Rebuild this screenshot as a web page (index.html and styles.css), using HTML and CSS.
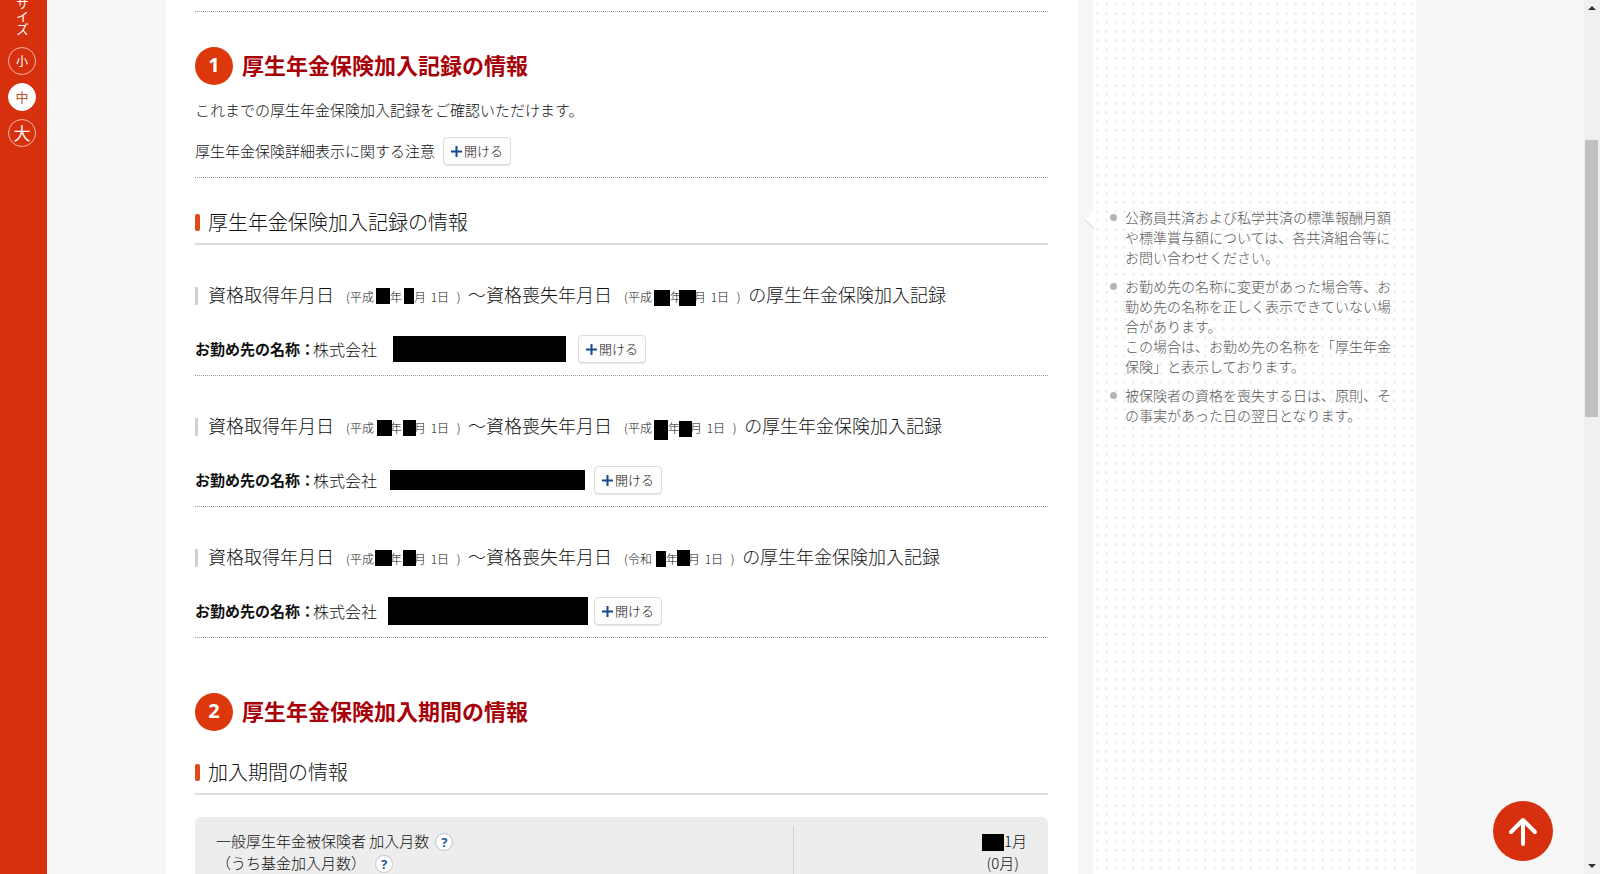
FILE: index.html
```html
<!DOCTYPE html>
<html lang="ja">
<head>
<meta charset="utf-8">
<title>厚生年金保険加入記録の情報</title>
<link rel="stylesheet" href="styles.css">
</head>
<body>
<nav class="sidebar" aria-label="文字サイズ">
  <span class="size-label">サイズ</span>
  <button class="size size-s" type="button">小</button>
  <button class="size size-m" type="button">中</button>
  <button class="size size-l" type="button">大</button>
</nav>
<div class="page">
  <main class="main">
    <div class="lead"></div>
    <section class="block">
      <h2 class="title"><span class="num">1</span>厚生年金保険加入記録の情報</h2>
      <p class="text">これまでの厚生年金保険加入記録をご確認いただけます。</p>
      <div class="notice">厚生年金保険詳細表示に関する注意
        <button class="open" type="button"><svg class="plus" viewBox="0 0 11 11"><path d="M5.5 0v11M0 5.5h11"/></svg>開ける</button>
      </div>
      <h3 class="subtitle">厚生年金保険加入記録の情報</h3>

      <article class="entry">
        <h4 class="period"><span>資格取得年月日</span><span class="date"><span class="open-paren">(</span>平成<span class="year"><i class="mask m14"></i></span>年<span class="month"><i class="mask m10"></i></span>月<span class="day">1</span>日<span class="close-paren">)</span></span><span>～資格喪失年月日</span><span class="date"><span class="open-paren">(</span>平成<span class="year wide"><i class="mask low m16"></i></span>年<span class="month"><i class="mask low over m17"></i></span>月<span class="day">1</span>日<span class="close-paren">)</span></span><span>の厚生年金保険加入記録</span></h4>
        <div class="employer"><b>お勤め先の名称：</b><span>株式会社</span><i class="name name-a"></i>
          <button class="open" type="button"><svg class="plus" viewBox="0 0 11 11"><path d="M5.5 0v11M0 5.5h11"/></svg>開ける</button>
        </div>
      </article>

      <article class="entry">
        <h4 class="period"><span>資格取得年月日</span><span class="date"><span class="open-paren">(</span>平成<span class="year"><i class="mask mid over m15"></i></span>年<span class="month"><i class="mask mid over m13"></i></span>月<span class="day">1</span>日<span class="close-paren">)</span></span><span>～資格喪失年月日</span><span class="date"><span class="open-paren">(</span>平成<span class="year"><i class="mask tall m14"></i></span>年<span class="month narrow"><i class="mask low over m13"></i></span>月<span class="day">1</span>日<span class="close-paren">)</span></span><span>の厚生年金保険加入記録</span></h4>
        <div class="employer"><b>お勤め先の名称：</b><span>株式会社</span><i class="name name-b"></i>
          <button class="open" type="button"><svg class="plus" viewBox="0 0 11 11"><path d="M5.5 0v11M0 5.5h11"/></svg>開ける</button>
        </div>
      </article>

      <article class="entry">
        <h4 class="period"><span>資格取得年月日</span><span class="date"><span class="open-paren">(</span>平成<span class="year"><i class="mask over m17"></i></span>年<span class="month"><i class="mask over m13"></i></span>月<span class="day">1</span>日<span class="close-paren">)</span></span><span>～資格喪失年月日</span><span class="date"><span class="open-paren">(</span>令和<span class="year narrow"><i class="mask mid m10"></i></span>年<span class="month narrow"><i class="mask over m13"></i></span>月<span class="day">1</span>日<span class="close-paren">)</span></span><span>の厚生年金保険加入記録</span></h4>
        <div class="employer"><b>お勤め先の名称：</b><span>株式会社</span><i class="name name-c"></i>
          <button class="open" type="button"><svg class="plus" viewBox="0 0 11 11"><path d="M5.5 0v11M0 5.5h11"/></svg>開ける</button>
        </div>
      </article>
    </section>

    <section class="block second">
      <h2 class="title"><span class="num">2</span>厚生年金保険加入期間の情報</h2>
      <h3 class="subtitle">加入期間の情報</h3>
      <table class="months">
        <tr>
          <th scope="row">一般厚生年金被保険者 加入月数<button class="help" type="button">?</button><br>（うち基金加入月数）<button class="help help-far" type="button">?</button></th>
          <td><i class="total"></i>1月<br><span class="fund">(0月)</span></td>
        </tr>
      </table>
    </section>
  </main>
  <aside class="aside">
    <svg class="notch" viewBox="0 0 10 20"><path d="M10 0 0 10 10 20z" fill="#fff"/><path d="M0 10 9 19" stroke="#d0d0d0" fill="none"/></svg>
    <ul class="notes">
      <li>公務員共済および私学共済の標準報酬月額や標準賞与額については、各共済組合等にお問い合わせください。</li>
      <li>お勤め先の名称に変更があった場合等、お勤め先の名称を正しく表示できていない場合があります。<br>この場合は、お勤め先の名称を「厚生年金保険」と表示しております。</li>
      <li>被保険者の資格を喪失する日は、原則、その事実があった日の翌日となります。</li>
    </ul>
  </aside>
</div>
<div class="scrollbar" aria-hidden="true">
  <svg class="arrow" viewBox="0 0 8 4"><path d="M4 0l4 4H0z"/></svg>
  <div class="thumb"></div>
  <svg class="arrow down" viewBox="0 0 8 4"><path d="M0 0h8L4 4z"/></svg>
</div>
<button class="to-top" type="button" aria-label="ページの先頭へ"><svg viewBox="0 0 60 60"><path d="M30 43V19M18 31l12-12 12 12"/></svg></button>
</body>
</html>
```

FILE: styles.css
```css
* { box-sizing: border-box; }
body {
  margin: 0;
  height: 100vh;
  overflow: hidden;
  display: flex;
  background: #f6f6f6;
  color: #111;
  font: 300 15px/22px "Noto Sans CJK JP", sans-serif;
}
h2, h3, h4, p, ul { margin: 0; padding: 0; font-weight: 300; }
button { font-family: inherit; font-weight: inherit; padding: 0; margin: 0; }

.sidebar {
  flex: 0 0 47px;
  background: #d6300f;
  display: flex;
  flex-direction: column;
  align-items: center;
  padding-right: 3px;
  gap: 8px;
}
.size-label {
  writing-mode: vertical-rl;
  color: #fff;
  font-size: 13px;
  line-height: 16px;
  font-weight: 400;
  margin: -3px 0 3px;
}
.size {
  width: 28px;
  height: 28px;
  border: 1px solid #f6b9a6;
  border-radius: 50%;
  background: none;
  color: #fff;
  line-height: 24px;
  font-weight: 400;
}
.size-s { font-size: 12px; }
.size-m { font-size: 13px; background: #fff; border-color: #fff; color: #b5532f; }
.size-l { font-size: 17px; }

.page {
  flex: 1;
  display: flex;
  align-items: stretch;
  gap: 15px;
  padding: 0 168px 0 119px;
  min-width: 0;
}
.main { flex: 1; background: #fff; padding: 0 30px 0 29px; min-width: 0; }
.lead { height: 12px; border-bottom: 1px dotted #999; }

.title {
  display: flex;
  align-items: flex-start;
  gap: 9px;
  padding-top: 35px;
  color: #a80008;
  font-size: 22px;
  line-height: 34px;
  font-weight: 700;
}
.num {
  width: 38px;
  height: 38px;
  border-radius: 50%;
  background: #dc380c;
  color: #fff;
  font: 700 20px/36px "Noto Sans", sans-serif;
  text-align: center;
}
.text { padding-top: 14px; }
.notice {
  display: flex;
  align-items: center;
  gap: 8px;
  padding: 16px 0 12px;
  border-bottom: 1px dotted #999;
}
.open {
  width: 68px;
  height: 28px;
  display: flex;
  align-items: center;
  justify-content: center;
  gap: 2px;
  border: 1px solid #ddd;
  border-radius: 4px;
  background: #fdfdfd;
  box-shadow: 0 1px 1px #e4e4e4;
  color: #111;
  font-size: 13px;
  line-height: 20px;
}
.plus { width: 11px; height: 11px; stroke: #174a8c; stroke-width: 2; }

.subtitle {
  display: flex;
  align-items: center;
  gap: 8px;
  margin-top: 29px;
  padding-bottom: 6px;
  border-bottom: 2px solid #ddd;
  font-size: 20px;
  line-height: 30px;
}
.subtitle::before {
  content: "";
  width: 5px;
  height: 17px;
  border-radius: 2px;
  background: #dc4a18;
}

.entry { border-bottom: 1px dotted #999; padding-bottom: 12px; }
.period {
  display: flex;
  align-items: baseline;
  padding-top: 35px;
  font-size: 18px;
  line-height: 28px;
  white-space: nowrap;
}
.period::before {
  content: "";
  align-self: center;
  width: 3px;
  height: 18px;
  margin-right: 10px;
  background: #d0d0d0;
}
.date { display: inline-flex; align-items: baseline; font-size: 12px; margin-left: 12px; }
.open-paren { width: 4px; }
.close-paren { width: 19px; text-align: center; }
.day { width: 11px; text-align: right; }
.year, .month { position: relative; align-self: stretch; }
.year { width: 16px; }
.month { width: 12px; }
.year.wide { width: 18px; }
.year.narrow { width: 14px; }
.month.narrow { width: 10px; }
.mask {
  position: absolute;
  right: 0;
  top: 5px;
  height: 16px;
  background: #000;
}
.mask.low { top: 7px; }
.mask.mid { top: 6px; }
.mask.tall { top: 6px; height: 20px; }
.mask.over { right: -2px; }
.m10 { width: 10px; }
.m13 { width: 13px; }
.m14 { width: 14px; }
.m15 { width: 15px; }
.m16 { width: 16px; }
.m17 { width: 17px; }

.employer { display: flex; align-items: center; padding-top: 24px; min-height: 52px; font-size: 16px; }
.employer b { font-size: 15px; font-weight: 700; width: 118px; white-space: nowrap; }
.name { background: #000; }
.name-a { width: 173px; height: 26px; margin: 0 12px 0 16px; }
.name-b { width: 195px; height: 20px; margin: 0 9px 0 13px; }
.name-c { width: 200px; height: 28px; margin: 0 6px 0 11px; }

.second { padding-top: 20px; }
.second .subtitle { margin-top: 26px; }
.months {
  width: 100%;
  height: 120px;
  margin-top: 22px;
  border-collapse: separate;
  border-spacing: 0;
  border-radius: 6px 6px 0 0;
  background: #ededed;
}
.months th, .months td { vertical-align: top; padding: 13px 21px; font-weight: 300; }
.months th { text-align: left; background: linear-gradient(#d0d0d0, #d0d0d0) right 9px / 1px 100% no-repeat; }
.months td { text-align: right; width: 254px; }
.fund { margin-right: 8px; }
.total { display: inline-block; width: 22px; height: 17px; background: #000; vertical-align: -4px; }
.help {
  width: 18px;
  height: 18px;
  margin-left: 6px;
  border: 1px solid #b8c6d2;
  border-radius: 50%;
  background: #fff;
  color: #1c5a90;
  font: 700 13px/16px "Noto Sans", sans-serif;
  vertical-align: 0;
}
.help-far { margin-left: 9px; }

.aside {
  flex: 0 0 323px;
  position: relative;
  background: radial-gradient(circle, #f0f0f0 1px, transparent 2px) 0 0 / 9px 9px #fff;
}
.notch { position: absolute; left: -8px; top: 210px; width: 10px; height: 20px; }
.notes { list-style: none; display: grid; gap: 9px; padding: 207px 22px 0 32px; color: #555; font-size: 14px; line-height: 20px; }
.notes li { position: relative; }
.notes li::before {
  content: "";
  position: absolute;
  left: -15px;
  top: 7px;
  width: 7px;
  height: 7px;
  border-radius: 50%;
  background: #b4b4b4;
}

.scrollbar { flex: 0 0 16px; background: #f0f0f0; display: flex; flex-direction: column; align-items: center; padding: 6px 1px 6px 0; }
.arrow { width: 8px; height: 4px; fill: #333; }
.thumb { width: 13px; height: 277px; margin-top: 130px; background: #c1c1c1; }
.down { margin-top: auto; }
.to-top {
  position: fixed;
  right: 47px;
  bottom: 13px;
  width: 60px;
  height: 60px;
  padding: 0;
  border: 0;
  border-radius: 50%;
  background: #d6300f;
}
.to-top svg { display: block; fill: none; stroke: #fff; stroke-width: 4; stroke-linecap: round; stroke-linejoin: round; }
```
